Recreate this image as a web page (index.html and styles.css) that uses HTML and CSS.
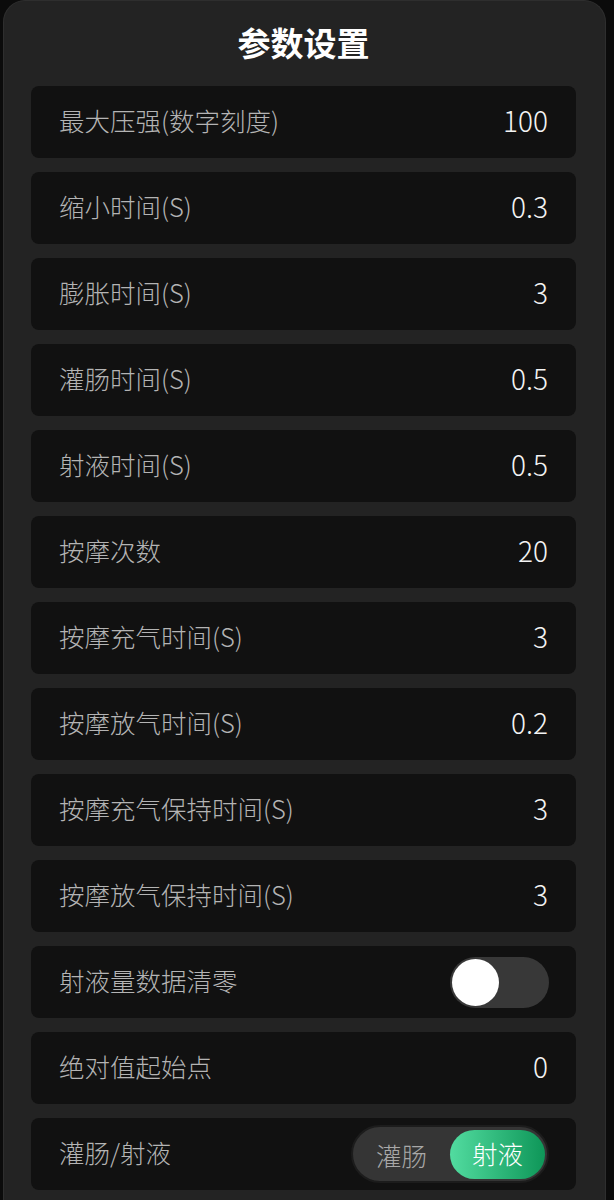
FILE: index.html
```html
<!DOCTYPE html>
<html lang="zh-CN">
<head>
  <meta charset="UTF-8" />
  <meta name="viewport" content="width=device-width, initial-scale=1.0" />
  <title>参数设置</title>
  <link rel="stylesheet" href="styles.css">
</head>
<body>
  <div class="panel">
    <h1>参数设置</h1>

    <div class="list">
      <div class="row"><span class="label">最大压强(数字刻度)</span><span class="value">100</span></div>
      <div class="row"><span class="label">缩小时间(S)</span><span class="value">0.3</span></div>
      <div class="row"><span class="label">膨胀时间(S)</span><span class="value">3</span></div>
      <div class="row"><span class="label">灌肠时间(S)</span><span class="value">0.5</span></div>
      <div class="row"><span class="label">射液时间(S)</span><span class="value">0.5</span></div>
      <div class="row"><span class="label">按摩次数</span><span class="value">20</span></div>
      <div class="row"><span class="label">按摩充气时间(S)</span><span class="value">3</span></div>
      <div class="row"><span class="label">按摩放气时间(S)</span><span class="value">0.2</span></div>
      <div class="row"><span class="label">按摩充气保持时间(S)</span><span class="value">3</span></div>
      <div class="row"><span class="label">按摩放气保持时间(S)</span><span class="value">3</span></div>
      <div class="row">
        <span class="label">射液量数据清零</span>
        <div class="switch"><div class="knob"></div></div>
      </div>
      <div class="row"><span class="label">绝对值起始点</span><span class="value">0</span></div>
      <div class="row">
        <span class="label">灌肠/射液</span>
        <div class="segment">
          <span class="seg">灌肠</span>
          <span class="seg active">射液</span>
        </div>
      </div>
    </div>
  </div>
</body>
</html>
```

FILE: styles.css
```css
body {
  margin: 0;
  background: #0b0b0b;
  font-family: "Noto Sans CJK SC", "Noto Sans", sans-serif;
  color: white;
}

.panel {
  width: 603px;
  margin-left: 3px;
  min-height: 1230px;
  background: #232323;
  border: 1px solid #2e2e2e;
  border-bottom: none;
  border-radius: 22px 22px 0 0;
  box-sizing: border-box;
  padding: 19px 29px 0 27px;
}

h1 {
  margin: 0;
  text-align: center;
  font-size: 33px;
  font-weight: 700;
  line-height: 44px;
}

.list {
  display: flex;
  flex-direction: column;
  gap: 14px;
  margin-top: 22px;
}

.row {
  height: 72px;
  background: #111111;
  border-radius: 8px;
  display: flex;
  align-items: center;
  justify-content: space-between;
  padding: 0 28px 0 28px;
}

.label {
  font-size: 25.5px;
  font-weight: 300;
  color: #b4b4b4;
  margin-bottom: 5px;
}

.value {
  font-size: 28px;
  font-weight: 300;
  color: #f4f4f4;
  margin-bottom: 5px;
}

.switch {
  width: 99px;
  height: 51px;
  border-radius: 26px;
  background: #383838;
  display: flex;
  align-items: center;
  padding: 0 2px;
  box-sizing: border-box;
  margin-right: -1px;
}

.knob {
  width: 47px;
  height: 47px;
  border-radius: 50%;
  background: #ffffff;
}

.segment {
  width: 198px;
  height: 58px;
  border-radius: 29px;
  background: #353535;
  border: 2px solid #1c1c1c;
  box-sizing: border-box;
  display: flex;
  align-items: center;
  padding: 0 2px 0 0;
  margin-right: -1px;
}

.seg {
  flex: 1;
  text-align: center;
  font-size: 25.5px;
  font-weight: 300;
  color: #a8a8a8;
}

.seg.active {
  flex: none;
  width: 95px;
  height: 49px;
  line-height: 45px;
  border-radius: 25px;
  color: #ffffff;
  background: linear-gradient(90deg, #52dca0, #0e9658);
}
```
